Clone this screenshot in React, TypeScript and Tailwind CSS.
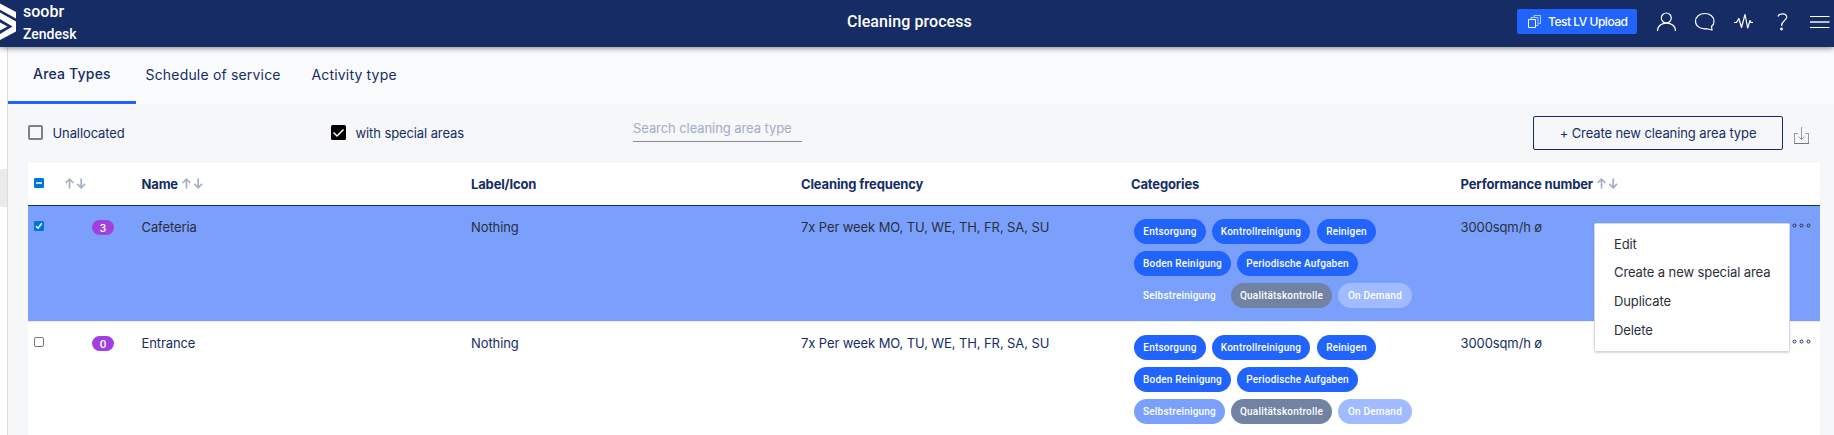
import React from "react";

const TAGS = [
  { label: "Entsorgung", cls: "w-[72px] mr-[6px] bg-[#2064fd]" },
  { label: "Kontrollreinigung", cls: "w-[98px] mr-[7px] bg-[#2064fd]" },
  { label: "Reinigen", cls: "w-[59px] mr-[40px] bg-[#2064fd]" },
  { label: "Boden Reinigung", cls: "w-[97px] mr-[6px] bg-[#2064fd]" },
  { label: "Periodische Aufgaben", cls: "w-[121px] mr-[40px] bg-[#2064fd]" },
  { label: "Selbstreinigung", cls: "w-[91px] mr-[6px] bg-[#7aa0fc]" },
  { label: "Qualitätskontrolle", cls: "w-[101px] mr-[6px] bg-[#7182a3]" },
  { label: "On Demand", cls: "w-[74px] bg-[#a0bbff]" },
];

function Sort() {
  return (
    <svg className="h-[11px] w-[21px] shrink-0" viewBox="0 0 21 11" fill="none" stroke="#a6b0c8" strokeWidth="1.7">
      <path d="M4.5 10.5V1.2M0.6 5L4.5 1.1L8.4 5" />
      <path d="M16.2 0.5V9.6M12.3 5.8L16.2 9.7L20.1 5.8" />
    </svg>
  );
}

function Dots() {
  return (
    <svg className="mt-[17px] h-[5px] w-[19px] shrink-0" viewBox="0 0 19 5" fill="none" stroke="currentColor" strokeWidth="1">
      <circle cx="2.5" cy="2.5" r="1.5" />
      <circle cx="9.5" cy="2.5" r="1.5" />
      <circle cx="16.5" cy="2.5" r="1.5" />
    </svg>
  );
}

function SmallBox({ state }: { state: "on" | "off" | "mixed" }) {
  if (state === "off") {
    return <span className="h-[10px] w-[10px] rounded-[2px] border border-[#767676] bg-white" />;
  }
  return (
    <svg className="h-[10px] w-[10px]" viewBox="0 0 10 10" fill="none" stroke="#fff" strokeWidth="1.5">
      <rect width="10" height="10" rx="1.3" fill="#0075d8" stroke="none" />
      {state === "on" ? <path d="M2 5.2L4 7.2L7.8 2.2" /> : <path d="M2 5H8" />}
    </svg>
  );
}

function Row({ name, count, checked }: { name: string; count: number; checked?: boolean }) {
  return (
    <div className={checked ? "flex h-[116px] shrink-0 border-b border-[#e9edf3] bg-[#7aa0fc] text-[#2b2f3a]" : "flex h-[116px] shrink-0 bg-white text-[#152d64]"}>
      <div className="w-[64px] pl-[6px] pt-[15px] leading-none">
        <span className="flex"><SmallBox state={checked ? "on" : "off"} /></span>
      </div>
      <div className="w-[49px] pt-[14px]">
        <div className="flex h-[15px] w-[22px] items-center justify-center rounded-full bg-[#a23fe0] text-[10px] font-semibold text-white">{count}</div>
      </div>
      <div className="w-[330px] pl-[0.5px] pt-[11px]">{name}</div>
      <div className="w-[330px] pt-[11px]">Nothing</div>
      <div className="w-[330px] pt-[11px]">7x Per week MO, TU, WE, TH, FR, SA, SU</div>
      <div className="w-[329px] pl-[3px] pt-[13px]">
        <div className="flex w-[290px] flex-wrap gap-y-[7px]">
          {TAGS.map((t) => (
            <span key={t.label} className={`flex h-[25px] items-center justify-center whitespace-nowrap rounded-full font-[Roboto] text-[10px] leading-[13px] font-medium tracking-[0.2px] text-white ${t.cls}`}>
              {t.label}
            </span>
          ))}
        </div>
      </div>
      <div className="w-[332px] pl-[0.5px] pt-[11px]">3000sqm/h ø</div>
      <Dots />
    </div>
  );
}

export default function App() {
  return (
    <div className="flex h-[435px] w-[1834px] flex-col overflow-hidden bg-[#f5f7f9] font-[Inter,sans-serif] text-[13px] leading-[20px] tracking-[-0.1px] text-[#152d64]">
      <header className="relative z-10 flex h-[47px] shrink-0 bg-[#152d64] text-white shadow-[0_1px_6px_rgba(0,0,0,0.5)]">
        <svg className="h-[47px] w-[16px] shrink-0" viewBox="0 0 16 47" fill="#fff">
          <path d="M0 3.5L16 12V18.5L0 9.8Z" />
          <path d="M0 12.5L16 21.5V31.5L0 40V34L12.5 26.5L0 19Z" />
          <path d="M0 22.5L7.5 26.5L0 30.5Z" />
        </svg>
        <div className="w-[828px] pl-[7px] font-[Roboto] font-medium">
          <div className="pt-[2px] text-[16px] tracking-[0px]">soobr</div>
          <div className="pt-[2px] text-[14px] tracking-[0px]">Zendesk</div>
        </div>
        <div className="w-[673px] pl-[3px] pt-[12px] font-[Roboto] text-[16px] font-medium tracking-[0.08px]">Cleaning process</div>
        <div className="mt-[9px] flex h-[25px] w-[120px] items-center rounded-[2px] bg-[#2064fd] pl-[10px]">
          <svg className="h-[15px] w-[15px] shrink-0" viewBox="0 0 15 15" fill="none" stroke="#fff">
            <path d="M1.500 5.500H8.500V13.500H1.500Z" />
            <path d="M4 5V3.500H11V11.500H9M7 3V1.500H13.500V9.500H11.500" opacity=".65" />
          </svg>
          <span className="whitespace-nowrap pl-[6px] pt-px text-[12px] font-medium tracking-[-0.48px]">Test LV Upload</span>
        </div>
        <svg className="h-[47px] w-[197px]" viewBox="1637 0 197 47" fill="none" stroke="#fff" strokeWidth="1.2">
          <circle cx="1666.300" cy="18" r="5" />
          <path d="M1657.500 31C1657.500 20.500 1675.500 20.500 1675.500 31" />
          <path d="M1712 29.800C1709 29.500 1708 29 1706.500 28.700C1699.500 29.500 1695.500 25.500 1695.500 21.200C1695.500 16.800 1699.500 13.500 1704.800 13.500C1710.200 13.500 1714 16.800 1714 21.200C1714 23.500 1713 25.300 1711.500 26.300Z" />
          <path d="M1734 22.500H1736.500L1738.800 18.500L1741.500 27.500L1745 14.500L1747.700 28L1750 20.500L1751 22.500H1753" strokeLinejoin="round" />
          <path d="M1778 16.500C1779 12.800 1787 12.800 1786.700 17.300C1786.500 20.800 1781.500 20.500 1781.500 26" />
          <circle cx="1781.500" cy="29" r=".8" fill="#fff" />
          <path d="M1810 16.500H1829.500M1810 27.500H1829.500" />
          <path d="M1810 22H1829.500" strokeWidth="2" opacity=".7" />
        </svg>
      </header>
      <div className="flex min-h-0 flex-1">
        <aside className="w-[8px] shrink-0 border-r border-[#dcdcdc] bg-white pt-[122px]">
          <div className="h-[38px] bg-[#ebebeb]" />
        </aside>
        <main className="flex w-[1826px] flex-col">
          <nav className="flex h-[57px] shrink-0 bg-[#fafbfd] text-[14px]">
            <div className="w-[128px] border-b-[3px] border-[#2064fd] pl-[25px] pt-[17px] font-medium tracking-[0.2px]">Area Types</div>
            <div className="w-[166px] pl-[9.5px] pt-[18px] tracking-[0.18px]">Schedule of service</div>
            <div className="pl-[9.5px] pt-[18px] tracking-[0.17px]">Activity type</div>
          </nav>
          <div className="flex h-[59px] shrink-0 pl-[20px]">
            <div className="flex w-[303px] pt-[19px]">
              <span className="mt-[2px] h-[15px] w-[15px] rounded-[2px] border-2 border-[#808080]" />
              <span className="pl-[9.5px]">Unallocated</span>
            </div>
            <div className="flex w-[302px] pt-[19px]">
              <svg className="mt-[2px] h-[15px] w-[15px]" viewBox="0 0 15 15">
                <rect width="15" height="15" rx="1.5" fill="#000" />
                <path d="M2.500 7.500L6 11L12.500 4.500" fill="none" stroke="#fff" strokeWidth="1.500" />
              </svg>
              <span className="pl-[9.5px]">with special areas</span>
            </div>
            <div className="mt-[14px] h-[24px] w-[169px] border-b border-[#868a93] tracking-[-0.08px] text-[#a3adc6]">Search cleaning area type</div>
            <div className="ml-[731px] mt-[12px] flex h-[34px] w-[250px] items-center justify-center rounded-[2px] border border-[#152d64] pb-px">+ Create new cleaning area type</div>
            <svg className="ml-[11px] mt-[23px] h-[17px] w-[16px]" viewBox="0 0 16 17" fill="none" stroke="#999">
              <path d="M4 6.500H0.500M0.500 6V16M11.500 6.500H15M14.500 6V16M7.500 0V12.500M4.500 9.500L7.500 12.500L10.500 9.500" />
              <path d="M0 16.500H15" stroke="#777" />
            </svg>
          </div>
          <div className="relative ml-[20px] flex min-h-0 w-[1792px] flex-1 flex-col bg-white">
            <div className="flex h-[43px] shrink-0 items-center border-b border-[#152d64] pb-px font-bold tracking-[-0.15px]">
              <div className="w-[37px] pb-px pl-[6px]"><SmallBox state="mixed" /></div>
              <div className="w-[76px]"><Sort /></div>
              <div className="flex w-[330px] items-center gap-[4px] pl-[0.5px]">Name <Sort /></div>
              <div className="w-[330px]">Label/Icon</div>
              <div className="w-[330px]">Cleaning frequency</div>
              <div className="w-[329px]">Categories</div>
              <div className="flex items-center gap-[4px] pl-[0.5px]">Performance number <Sort /></div>
            </div>
            <Row name="Cafeteria" count={3} checked />
            <Row name="Entrance" count={0} />
            <div className="absolute left-[1566px] top-[60px] h-[129px] w-[196px] rounded-[2px] border border-[#d5d9e2] bg-white pl-[19px] pt-[10px] text-[#2b2f3a] shadow-[0_1px_2px_rgba(0,0,0,0.15)]">
              <div className="h-[28px]">Edit</div>
              <div className="h-[29px]">Create a new special area</div>
              <div className="h-[29px]">Duplicate</div>
              <div>Delete</div>
            </div>
          </div>
        </main>
      </div>
    </div>
  );
}
